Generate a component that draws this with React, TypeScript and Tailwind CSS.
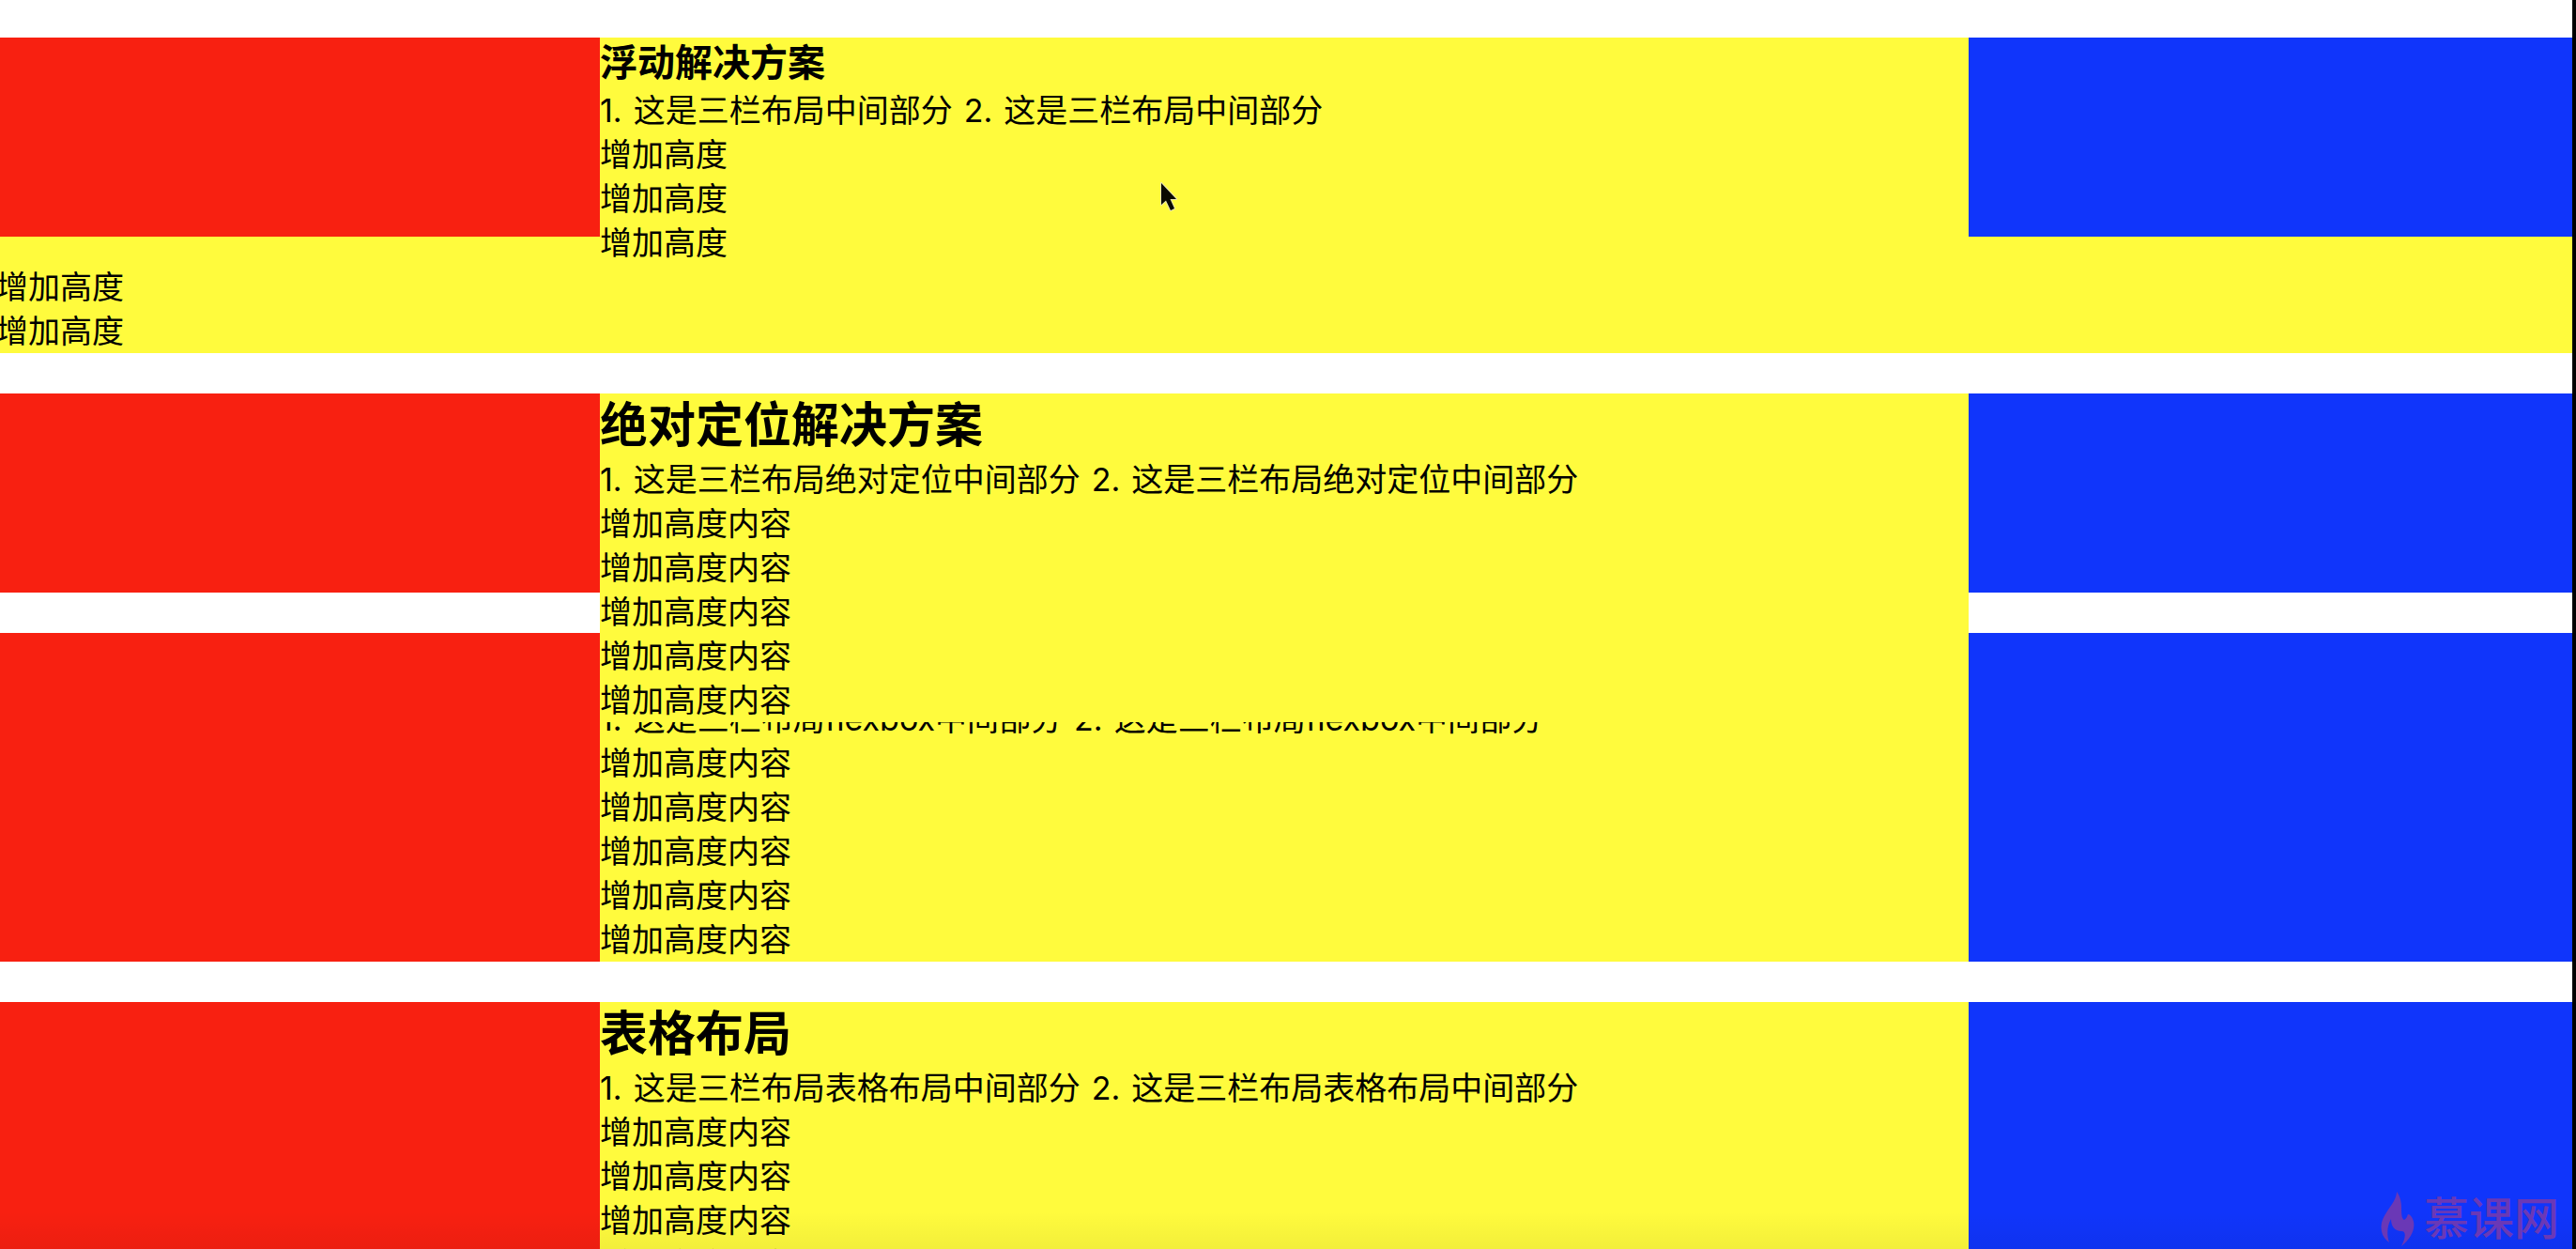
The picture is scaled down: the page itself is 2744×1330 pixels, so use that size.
import type { ReactNode } from "react";

const repeat = (text: string, count: number) =>
  Array.from({ length: count }, (_, i) => <p key={i}>{text}</p>);

function SideColumn({ color }: { color: string }) {
  return <div className={`w-[643px] shrink-0 ${color}`} />;
}

function Columns({ className = "", children }: { className?: string; children: ReactNode }) {
  return (
    <section className={`flex ${className}`}>
      <SideColumn color="bg-[#f82011]" />
      {children}
      <SideColumn color="bg-[#1035fb]" />
    </section>
  );
}

function Intro({ text }: { text: string }) {
  return (
    <ol className="flex gap-3">
      {[1, 2].map((n) => (
        <li key={n} className="flex gap-3">
          <span>{n}.</span>
          <span>{text}</span>
        </li>
      ))}
    </ol>
  );
}

function Center({ title, intro, className = "" }: { title: string; intro: string; className?: string }) {
  return (
    <div className={`min-w-0 flex-1 bg-[#fffb3d] ${className}`}>
      <h1 className="text-[51px] leading-[68px] font-bold">{title}</h1>
      <Intro text={intro} />
      {repeat("增加高度内容", 5)}
    </div>
  );
}

function Pointer() {
  return (
    <svg
      className="pointer-events-none absolute top-[191px] left-[1234px] z-20 h-9 w-6"
      viewBox="0 0 24 36"
      aria-hidden="true"
    >
      <path
        d="M3 4 L3 27 L8 22.5 L13 33 L17 31 L12.5 21 L19 21 Z"
        fill="#0a0a00"
        stroke="#e9e6b0"
        strokeWidth="2"
        paintOrder="stroke"
        strokeLinejoin="round"
      />
    </svg>
  );
}

function Watermark() {
  return (
    <div className="pointer-events-none absolute right-3.5 bottom-0.5 z-20 flex items-center gap-2.5 text-[#6a38b6]">
      <svg className="h-[60px] w-9" viewBox="0 0 36 60" fill="currentColor" aria-hidden="true">
        <path d="M17 1 C17 12 4 22 1 34 C-1 44 3 51 9 55 C6 46 7 37 11 30 C11 38 15 43 22 43 C27 43 27 49 22 59 C31 52 37 42 35 33 C34 28 31 25 29 25 C28 28 27 30 25 31 C19 27 26 13 17 1 Z" />
      </svg>
      <span className="text-[48px] leading-[60px] font-medium">慕课网</span>
    </div>
  );
}

export default function App() {
  return (
    <div className="relative h-screen overflow-hidden border-r-4 border-black bg-white font-['Inter','Noto_Sans_CJK_SC',sans-serif] text-[34px] leading-[47px] text-black">
      <main lang="zh-CN" className="-ml-1 flex flex-col gap-[43px] pt-10">
        <section>
          <div className="float-left h-[212px] w-[643px] bg-[#f82011]" />
          <div className="float-right h-[212px] w-[643px] bg-[#1035fb]" />
          <div className="bg-[#fffb3d]">
            <h2 className="text-[40px] leading-[54px] font-bold">浮动解决方案</h2>
            <Intro text="这是三栏布局中间部分" />
            {repeat("增加高度", 5)}
          </div>
        </section>

        <Columns className="h-[212px]">
          <Center className="z-10 self-start" title="绝对定位解决方案" intro="这是三栏布局绝对定位中间部分" />
        </Columns>

        <Columns>
          <Center title="flexbox解决方案" intro="这是三栏布局flexbox中间部分" />
        </Columns>

        <Columns>
          <Center title="表格布局" intro="这是三栏布局表格布局中间部分" />
        </Columns>
      </main>
      <Pointer />
      <div className="pointer-events-none absolute inset-x-0 bottom-0 z-10 h-10 bg-linear-to-b from-transparent to-black/5" />
      <Watermark />
    </div>
  );
}
